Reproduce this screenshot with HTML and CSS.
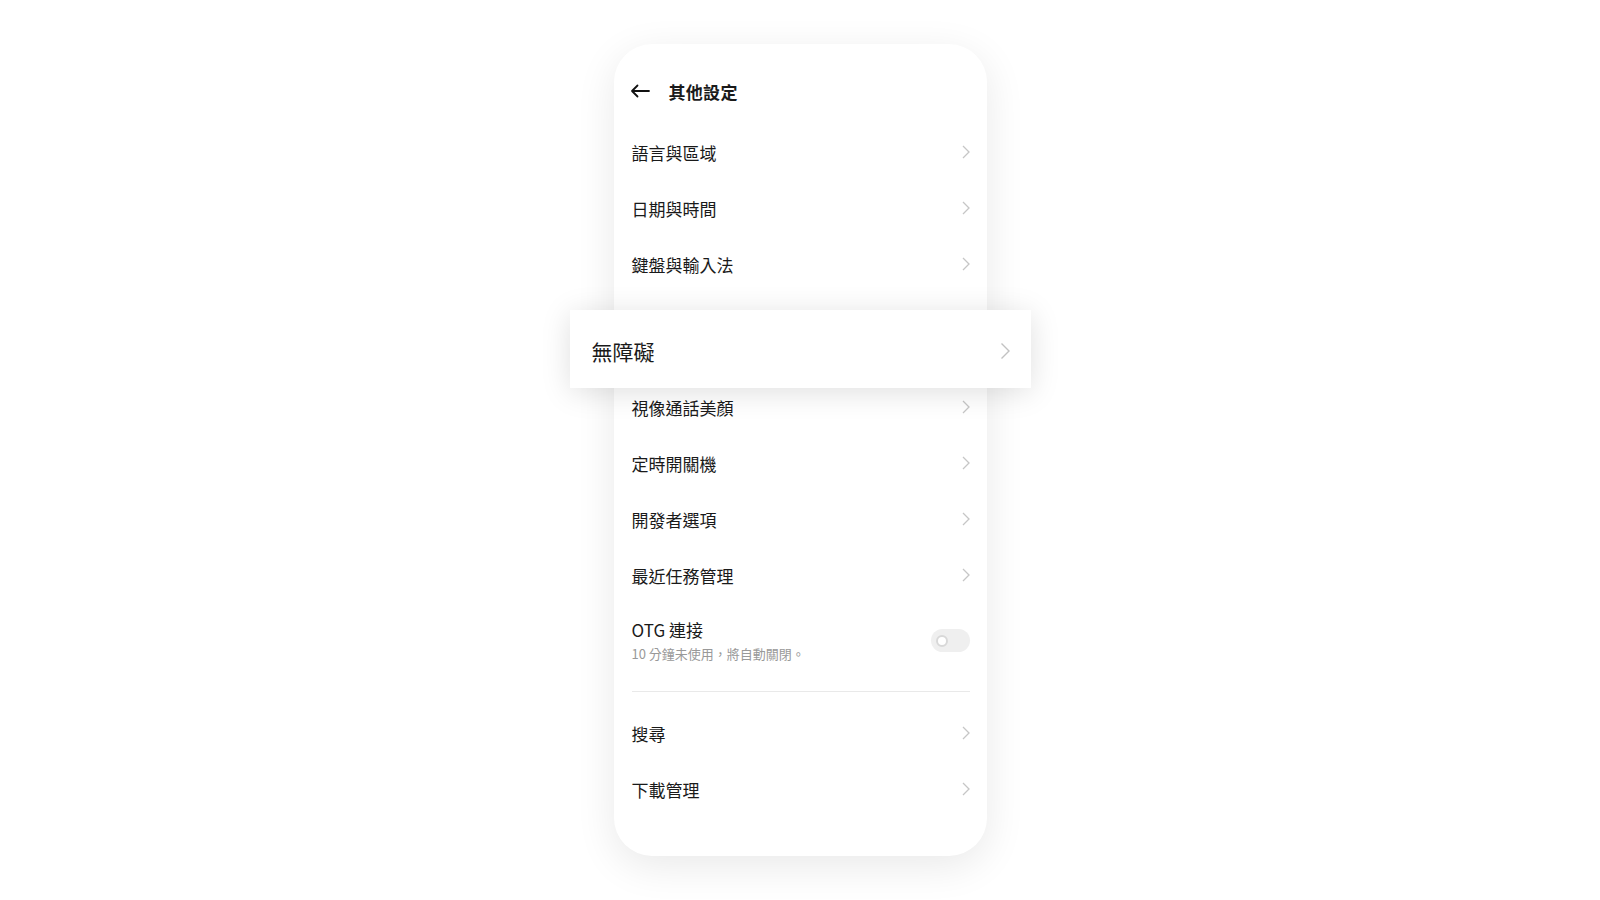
FILE: index.html
```html
<!DOCTYPE html>
<html>
<head>
  <meta charset="utf-8">
  <meta name="viewport" content="width=device-width, initial-scale=1.0" />
  <title>其他設定</title>
  <link rel="stylesheet" href="styles.css">
</head>
<body>

<div class="stage">
  <div class="phone">

    <!-- 頂部標題列 -->
    <div class="header">
      <svg class="back" width="20" height="14" viewBox="0 0 20 14">
        <path d="M19 7H2M7.5 1.5L2 7l5.5 5.5" fill="none" stroke="#111" stroke-width="1.8" stroke-linecap="round" stroke-linejoin="round"/>
      </svg>
      <span class="title">其他設定</span>
    </div>

    <div class="row"><span>語言與區域</span><svg class="chev" width="8" height="14" viewBox="0 0 8 14"><path d="M1 1l6 6-6 6" fill="none" stroke="#c6c6c6" stroke-width="1.3"/></svg></div>
    <div class="row"><span>日期與時間</span><svg class="chev" width="8" height="14" viewBox="0 0 8 14"><path d="M1 1l6 6-6 6" fill="none" stroke="#c6c6c6" stroke-width="1.3"/></svg></div>
    <div class="row"><span>鍵盤與輸入法</span><svg class="chev" width="8" height="14" viewBox="0 0 8 14"><path d="M1 1l6 6-6 6" fill="none" stroke="#c6c6c6" stroke-width="1.3"/></svg></div>

    <!-- 被放大項目遮住的位置 -->
    <div class="spacer"></div>

    <div class="row"><span>視像通話美顏</span><svg class="chev" width="8" height="14" viewBox="0 0 8 14"><path d="M1 1l6 6-6 6" fill="none" stroke="#c6c6c6" stroke-width="1.3"/></svg></div>
    <div class="row"><span>定時開關機</span><svg class="chev" width="8" height="14" viewBox="0 0 8 14"><path d="M1 1l6 6-6 6" fill="none" stroke="#c6c6c6" stroke-width="1.3"/></svg></div>
    <div class="row"><span>開發者選項</span><svg class="chev" width="8" height="14" viewBox="0 0 8 14"><path d="M1 1l6 6-6 6" fill="none" stroke="#c6c6c6" stroke-width="1.3"/></svg></div>
    <div class="row"><span>最近任務管理</span><svg class="chev" width="8" height="14" viewBox="0 0 8 14"><path d="M1 1l6 6-6 6" fill="none" stroke="#c6c6c6" stroke-width="1.3"/></svg></div>

    <div class="row-otg">
      <div>
        <div class="otg-title">OTG 連接</div>
        <div class="otg-sub">10 分鐘未使用，將自動關閉。</div>
      </div>
      <div class="switch"><span class="knob"></span></div>
    </div>

    <div class="divider"></div>

    <div class="row"><span>搜尋</span><svg class="chev" width="8" height="14" viewBox="0 0 8 14"><path d="M1 1l6 6-6 6" fill="none" stroke="#c6c6c6" stroke-width="1.3"/></svg></div>
    <div class="row"><span>下載管理</span><svg class="chev" width="8" height="14" viewBox="0 0 8 14"><path d="M1 1l6 6-6 6" fill="none" stroke="#c6c6c6" stroke-width="1.3"/></svg></div>

    <!-- 放大浮起的項目 -->
    <div class="popout">
      <span>無障礙</span>
      <svg width="11" height="18" viewBox="0 0 11 18"><path d="M1.5 1.5l7.5 7.5-7.5 7.5" fill="none" stroke="#c2c2c2" stroke-width="1.4"/></svg>
    </div>

  </div>
</div>

</body>
</html>
```

FILE: styles.css
```css
/* 全局 */
body {
  margin: 0;
  background: #fff;
  font-family: "Noto Sans CJK TC", "Noto Sans", sans-serif;
  color: #1a1a1a;
}

.stage {
  display: flex;
  justify-content: center;
  padding-top: 44px;
  height: 900px;
  box-sizing: border-box;
}

/* 手機畫面卡片 */
.phone {
  position: relative;
  width: 373px;
  height: 812px;
  box-sizing: border-box;
  padding: 0 17px 0 18px;
  background: #fff;
  border-radius: 38px;
  box-shadow: 0 10px 40px rgba(0, 0, 0, 0.09);
}

.header {
  display: flex;
  align-items: center;
  height: 40px;
  margin-top: 27px;
  margin-bottom: 13px;
}

.back {
  margin-left: -2px;
  margin-right: 19px;
}

.title {
  font-size: 17px;
  font-weight: 700;
  letter-spacing: 0.3px;
}

.row {
  display: flex;
  align-items: center;
  justify-content: space-between;
  height: 56px;
  font-size: 17px;
}

.chev {
  display: block;
}

.spacer {
  height: 87px;
}

.row-otg {
  display: flex;
  align-items: center;
  justify-content: space-between;
  padding: 15px 0 14px;
}

.otg-title {
  font-size: 17px;
  line-height: 24px;
}

.otg-sub {
  margin-top: 3px;
  font-size: 13px;
  line-height: 18px;
  color: #999;
}

.switch {
  width: 39px;
  height: 23px;
  border-radius: 12px;
  background: #efefef;
  display: flex;
  align-items: center;
  padding-left: 5px;
  box-sizing: border-box;
}

.knob {
  width: 8px;
  height: 8px;
  border-radius: 50%;
  background: #fff;
  border: 2.5px solid #d8d8d8;
}

.divider {
  height: 1px;
  background: #e9e9e9;
  margin: 14px 0 13px;
}

/* 浮起的無障礙 */
.popout {
  position: absolute;
  left: -44px;
  top: 266px;
  width: 461px;
  height: 78px;
  box-sizing: border-box;
  padding: 3px 20px 0 22px;
  display: flex;
  align-items: center;
  justify-content: space-between;
  background: #fff;
  font-size: 21px;
  box-shadow: 0 4px 30px rgba(0, 0, 0, 0.13);
}
```
